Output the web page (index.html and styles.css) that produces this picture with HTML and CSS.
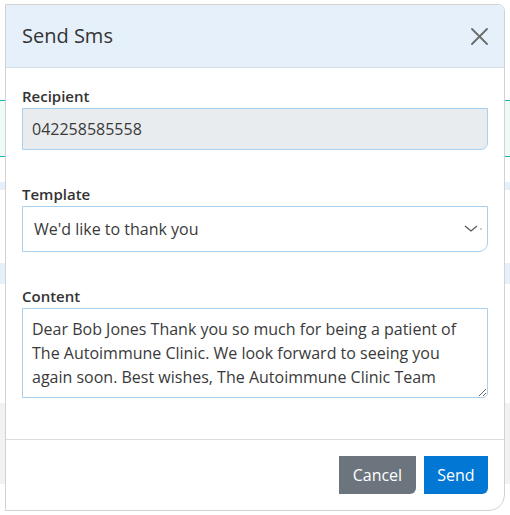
FILE: index.html
```html
<!DOCTYPE html>
<html lang="en">
<head>
<meta charset="utf-8">
<title>Send Sms</title>
<link rel="stylesheet" href="styles.css">
</head>
<body>
<div class="page">
  <div class="band band-white h100"></div>
  <div class="band band-teal"></div>
  <div class="band band-white h25"></div>
  <div class="band band-blue h8"></div>
  <div class="band band-white h73"></div>
  <div class="band band-blue h21"></div>
  <div class="band band-white h119"></div>
  <div class="band band-gray h81"></div>
  <div class="band band-white h31"></div>
</div>

<div class="modal" role="dialog" aria-labelledby="modal-title">
  <div class="modal-header">
    <h5 class="modal-title" id="modal-title">Send Sms</h5>
    <button class="close-btn" type="button" aria-label="Close">
      <svg width="17" height="17" viewBox="0 0 17 17"><path d="M1 1 L16 16 M16 1 L1 16" stroke="#6b6b6b" stroke-width="1.8" fill="none" stroke-linecap="round"/></svg>
    </button>
  </div>
  <div class="modal-body">
    <div class="form-group">
      <label class="form-label" for="recipient">Recipient</label>
      <input class="form-control input-readonly" id="recipient" type="text" value="042258585558" readonly>
    </div>
    <div class="form-group">
      <label class="form-label" for="template">Template</label>
      <div class="select-wrap">
        <select class="form-control form-select" id="template">
          <option>We'd like to thank you</option>
        </select>
        <svg class="chevron" width="20" height="10" viewBox="0 0 20 10"><path d="M1 2 L7 7 L13 2" stroke="#555" stroke-width="1.2" fill="none"/><path d="M16 5 L18 5" stroke="#999" stroke-width="1"/></svg>
      </div>
    </div>
    <div class="form-group last">
      <label class="form-label" for="content">Content</label>
      <textarea class="form-control form-textarea" id="content" rows="3">Dear Bob Jones Thank you so much for being a patient of The Autoimmune Clinic. We look forward to seeing you again soon. Best wishes, The Autoimmune Clinic Team</textarea>
    </div>
  </div>
  <div class="modal-footer">
    <button class="btn btn-secondary" type="button">Cancel</button>
    <button class="btn btn-primary" type="button">Send</button>
  </div>
</div>
</body>
</html>
```

FILE: styles.css
```css
* { box-sizing: border-box; }

html, body {
  margin: 0;
  padding: 0;
  background: #fff;
  font-family: "Open Sans", "Noto Sans", "Liberation Sans", sans-serif;
  color: #333;
}

.page {
  width: 510px;
  height: 515px;
  overflow: hidden;
}

.band { width: 100%; }
.band-white { background: #fff; }
.band-blue { background: #e6f0fa; }
.band-gray { background: #f2f2f2; }
.band-teal {
  height: 57px;
  background: #eefaf8;
  border-top: 1.5px solid #1cb5a6;
  border-bottom: 1.5px solid #1cb5a6;
}
.h100 { height: 100px; }
.h25 { height: 25px; }
.h8 { height: 8px; }
.h73 { height: 73px; }
.h21 { height: 21px; }
.h119 { height: 119px; }
.h81 { height: 81px; }
.h31 { height: 31px; }

.modal {
  position: absolute;
  left: 5px;
  top: 4px;
  width: 500px;
  background: #fff;
  border: 1px solid #d2d2d2;
  border-radius: 0 7px 16px 0;
  overflow: hidden;
  display: flex;
  flex-direction: column;
}

.modal-header {
  display: flex;
  align-items: center;
  justify-content: space-between;
  padding: 16px 16px 16px 16px;
  background: #e6f0fa;
  border-bottom: 1px solid #d4dfea;
}

.modal-title {
  margin: 0;
  font-size: 20px;
  font-weight: 400;
  line-height: 30px;
  color: #333;
}

.close-btn {
  display: flex;
  padding: 0;
  border: 0;
  background: transparent;
  width: 17px;
  height: 17px;
}

.modal-body {
  padding: 16px 16px 41px 16px;
}

.form-group {
  display: flex;
  flex-direction: column;
  margin-bottom: 32px;
}
.form-group.last { margin-bottom: 0; }

.form-label {
  font-size: 15px;
  font-weight: 600;
  line-height: 24px;
  color: #333;
}

.form-control {
  width: 100%;
  font-family: inherit;
  font-size: 16px;
  line-height: 24px;
  color: #3a3a3a;
  border: 1px solid #a9cfee;
  background: #fff;
  margin: 0;
  outline: none;
}

.input-readonly {
  height: 42px;
  padding: 8px 9px;
  background: #e9ecef;
  border-radius: 0 0 7px 0;
}

.select-wrap {
  position: relative;
  display: flex;
}

.form-select {
  appearance: none;
  -webkit-appearance: none;
  height: 46px;
  padding: 10px 11px;
  border-radius: 0 0 9px 0;
}

.chevron {
  position: absolute;
  right: 4px;
  top: 18px;
}

.form-textarea {
  height: 90px;
  padding: 8px 9px 7px 9px;
  border-radius: 0 0 5px 0;
  resize: vertical;
  overflow: hidden;
  display: block;
}

.modal-footer {
  display: flex;
  justify-content: flex-end;
  gap: 8px;
  padding: 16px;
  border-top: 1px solid #dcdcdc;
}

.btn {
  font-family: inherit;
  font-size: 16px;
  line-height: 24px;
  padding: 7px 13.5px;
  height: 38px;
  border: 0;
  color: #fff;
  border-radius: 0 0 6px 0;
}
.btn-secondary { background: #6c757d; }
.btn-primary { background: #0277d4; }
```
